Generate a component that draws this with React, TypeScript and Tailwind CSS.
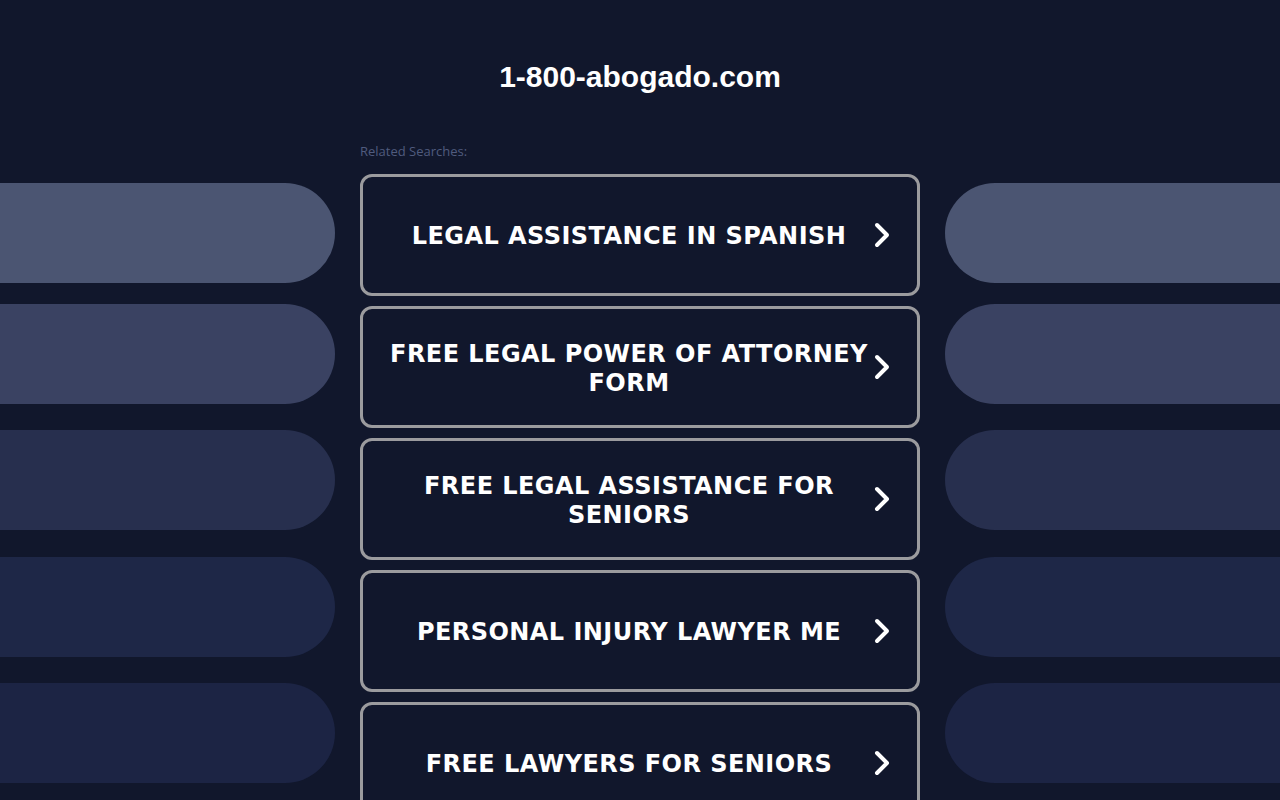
import React from "react";

const items = [
  "LEGAL ASSISTANCE IN SPANISH",
  "FREE LEGAL POWER OF ATTORNEY FORM",
  "FREE LEGAL ASSISTANCE FOR SENIORS",
  "PERSONAL INJURY LAWYER ME",
  "FREE LAWYERS FOR SENIORS",
];

const pills = [
  { c: "bg-[#4b5572]", m: "mt-[9px]" },
  { c: "bg-[#3a4262]", m: "mt-[21px]" },
  { c: "bg-[#272f4e]", m: "mt-[26px]" },
  { c: "bg-[#1e2747]", m: "mt-[27px]" },
  { c: "bg-[#1c2444]", m: "mt-[26px]" },
];

function Chevron() {
  return (
    <svg width="18" height="28" viewBox="0 0 18 28" fill="none" className="shrink-0">
      <path d="M4 4 L14 14 L4 24" stroke="white" strokeWidth="4" strokeLinecap="round" strokeLinejoin="round" />
    </svg>
  );
}

export default function App() {
  return (
    <div className="w-full h-[800px] overflow-hidden bg-[#11172c]">
      <div className="h-[138px] flex flex-col items-center">
        <h1 className="mt-[58px] text-[30px] leading-[38px] font-bold text-white font-['Liberation_Sans',Arial,sans-serif]">
          1-800-abogado.com
        </h1>
      </div>
      <div className="flex">
        <div className="w-[335px] shrink-0 flex flex-col pt-[36px]">
          {pills.map((p, i) => (
            <div key={i} className={`${p.c} ${p.m} h-[100px] rounded-r-full`} />
          ))}
        </div>
        <div className="w-[560px] mx-[25px] shrink-0 flex flex-col">
          <div className="h-[36px] pt-[1px] text-[13px] leading-[24px] text-[#505b7e] font-['Open_Sans',sans-serif]">
            Related Searches:
          </div>
          {items.map((t) => (
            <div
              key={t}
              className="h-[122px] mb-[10px] shrink-0 border-[3px] border-[#9b9b9e] rounded-[12px] flex items-center pl-[26px] pr-[26px] pt-[3px]"
            >
              <div className="flex-1 text-center text-white font-bold text-[24px] leading-[29px] tracking-[0.45px] font-['DejaVu_Sans',Verdana,sans-serif]">
                {t}
              </div>
              <div className="ml-[4px] -mt-[3px]">
                <Chevron />
              </div>
            </div>
          ))}
        </div>
        <div className="w-[335px] shrink-0 flex flex-col pt-[36px]">
          {pills.map((p, i) => (
            <div key={i} className={`${p.c} ${p.m} h-[100px] rounded-l-full`} />
          ))}
        </div>
      </div>
    </div>
  );
}
